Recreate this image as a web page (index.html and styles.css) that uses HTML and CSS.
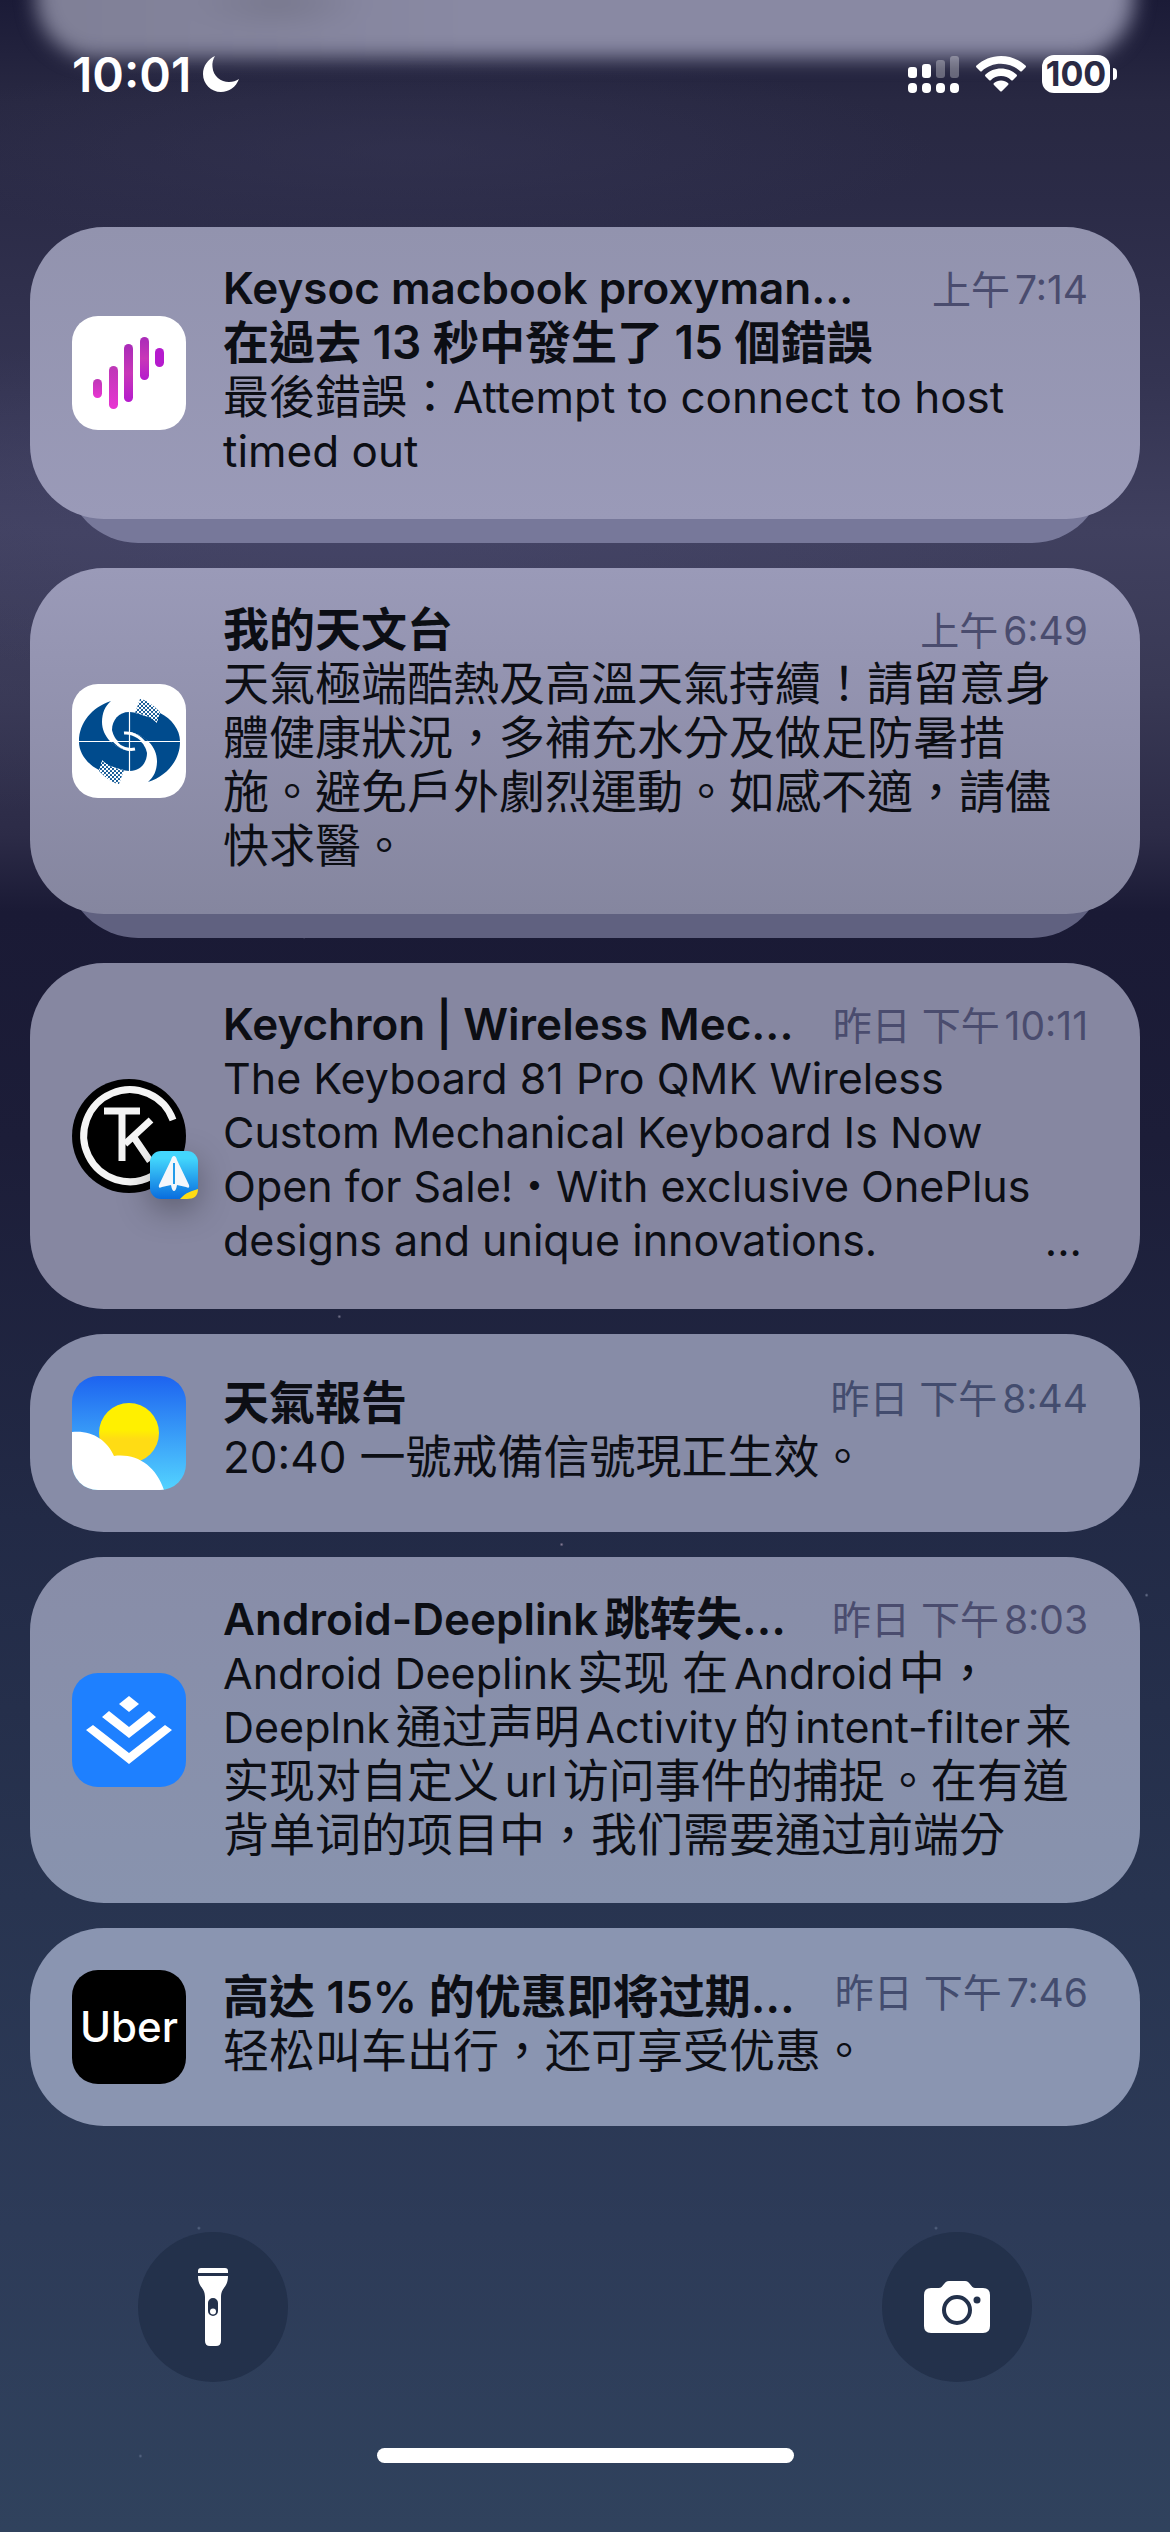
FILE: index.html
```html
<!DOCTYPE html>
<html lang="zh-Hant-TW">
<head>
<meta charset="utf-8">
<meta name="viewport" content="width=device-width">
<title>通知中心</title>
<link rel="stylesheet" href="styles.css">
</head>
<body>
<div class="screen">
  <div class="passing-card"></div>
  <header class="status">
    <div class="status-left">
      <time>10:01</time>
      <svg class="moon" viewBox="0 0 36 36" aria-hidden="true"><path d="M12 0C10 3 9 7 9.500 11C10 20 18 26 26 26C30 26 33 25 36 23C33 31 26 36 18 36C8 36 0 28 0 18C0 10 5 3 12 0Z"/></svg>
    </div>
    <div class="status-right">
      <svg class="signal" viewBox="0 0 52 38" aria-hidden="true">
        <g class="on"><rect x="0" y="12" width="9" height="11" rx="3"/><rect x="14" y="9" width="9" height="14" rx="3"/><rect x="0" y="28" width="9" height="10" rx="4"/><rect x="14" y="28" width="9" height="10" rx="4"/><rect x="28" y="28" width="9" height="10" rx="4"/><rect x="42" y="28" width="9" height="10" rx="4"/></g>
        <g class="off"><rect x="28" y="5" width="9" height="18" rx="3"/><rect x="42" y="1" width="9" height="22" rx="3"/></g>
      </svg>
      <svg class="wifi" viewBox="0 0 50 36" aria-hidden="true"><path d="M25 0C34.500 0 43 3.600 49.500 9.500Q50.500 10.500 49.500 11.500L46 15Q45 16 44 15C39 10.500 32.500 7.800 25 7.800S11 10.500 6 15Q5 16 4 15L.5 11.500Q-.5 10.500 .5 9.500C7 3.600 15.500 0 25 0ZM25 12.500C31 12.500 36.500 14.800 40.500 18.500Q41.500 19.500 40.500 20.500L37 24Q36 25 35 24C32.500 21.500 29 20 25 20S17.500 21.500 15 24Q14 25 13 24L9.500 20.500Q8.500 19.500 9.500 18.500C13.500 14.800 19 12.500 25 12.500ZM25 24.500C28 24.500 30 25.500 32 27Q33 28 32 29L26 35Q25 36 24 35L18 29Q17 28 18 27C20 25.500 22 24.500 25 24.500Z"/></svg>
      <div class="battery"><span>100</span></div>
    </div>
  </header>

  <main class="list">
    <article class="card stacked">
      <svg class="icon" viewBox="0 0 114 114" aria-hidden="true">
        <defs><linearGradient id="bar" x1="0" y1="0" x2="0" y2="1"><stop offset="0" stop-color="#a92bb8"/><stop offset=".5" stop-color="#c837b8"/><stop offset="1" stop-color="#b51bcd"/></linearGradient>
        <linearGradient id="bar2" x1="0" y1="0" x2="0" y2="1"><stop offset="0" stop-color="#bd38b6"/><stop offset="1" stop-color="#e835d2"/></linearGradient></defs>
        <rect width="114" height="114" rx="26" fill="#fff"/>
        <rect x="21" y="63" width="9" height="19" rx="4.500" fill="url(#bar2)"/><rect x="37" y="50" width="9" height="43" rx="4.500" fill="url(#bar2)"/><rect x="52" y="28" width="9" height="58" rx="4.500" fill="url(#bar)"/><rect x="68" y="21" width="9" height="43" rx="4.500" fill="url(#bar)"/><rect x="83" y="32" width="9" height="19" rx="4.500" fill="#b51bcd"/>
      </svg>
      <div class="content">
        <div class="head"><h2 class="latin">Keysoc macbook proxyman...</h2><time>上午7:14</time></div>
        <h3>在過去 13 秒中發生了 15 個錯誤</h3>
        <p>最後錯誤：<span class="latin">Attempt to connect to host timed out</span></p>
      </div>
    </article>

    <article class="card stacked">
      <svg class="icon" viewBox="0 0 114 114" aria-hidden="true">
        <defs><pattern id="dots" width="4" height="4" patternUnits="userSpaceOnUse"><rect width="4" height="4" fill="#fff"/><circle cx="1" cy="1" r="1.100" fill="#004b8d"/><circle cx="3" cy="3" r="1.100" fill="#004b8d"/></pattern></defs>
        <rect width="114" height="114" rx="26" fill="#fff"/>
        <g id="swirl">
          <path fill="#004b8d" d="M39 17C20 23 7 39 7 57L7 58H57V66C42 65 30 52 30 38C30 29 33 22 39 17Z"/>
          <path fill="#004b8d" d="M57 28C47 28 40 36 40 46C41 51 44 56 47 58H57Z"/>
          <path fill="#004b8d" d="M7 58H39C45 63 51 66 57 67V87C52 87 46 84 38 82C32 80 29 82 27 86C15 80 7 69 7 58Z"/>
          <path fill="url(#dots)" d="M30 76C36 82 44 85 52 86L47 100C40 99 33 93 27 87Z"/>
        </g>
        <use href="#swirl" transform="rotate(180 57.500 57.500)"/>
        <path d="M52 49C62 48 72 55 77 66M63 65C53 67 44 61 38 51" fill="none" stroke="#fff" stroke-width="3"/>
        <path d="M57.500 28V87M7 57.500H108" stroke="#fff" stroke-width="1.200"/>
      </svg>
      <div class="content">
        <div class="head"><h2>我的天文台</h2><time>上午6:49</time></div>
        <p>天氣極端酷熱及高溫天氣持續！請留意身體健康狀況，多補充水分及做足防暑措施。避免戶外劇烈運動。如感不適，請儘快求醫。</p>
      </div>
    </article>

    <article class="card">
      <div class="icon avatar">
        <svg viewBox="0 0 114 114" aria-hidden="true"><circle cx="57" cy="57" r="57"/><g fill="none" stroke="#f4f4f4" stroke-width="7"><path d="M101 41A46 46 0 1 0 80 97"/><path d="M32 32H68M50 32V82"/><path d="M79 41L53 65M61 57L78 82"/></g></svg>
        <svg class="badge" viewBox="0 0 48 48" aria-hidden="true"><defs><linearGradient id="sky" x1="0" y1="0" x2="0" y2="1"><stop offset=".15" stop-color="#43d6fc"/><stop offset="1" stop-color="#096dde"/></linearGradient></defs><rect width="48" height="48" rx="11" fill="url(#sky)"/><path d="M30 48C36 41 42 40 48 38C48 45 44 48 37 48Z" fill="#ffdc14"/><path d="M24 5Q26 5 27 9L39 34Q40 38 36 36L27 34Q26 40 24 40Q22 40 21 34L12 36Q8 38 9 34L21 9Q22 5 24 5Z" fill="#f4f7fb"/><path d="M24 12V33" stroke="#249cea" stroke-width="2"/></svg>
      </div>
      <div class="content dense">
        <div class="head"><h2 class="latin">Keychron | Wireless Mec...</h2><time>昨日 下午10:11</time></div>
        <p class="latin">The Keyboard 81 Pro QMK Wireless Custom Mechanical Keyboard Is Now Open for Sale!・With exclusive OnePlus</p>
        <p class="latin last-line"><span>designs and unique innovations.</span><span>...</span></p>
      </div>
    </article>

    <article class="card compact">
      <svg class="icon" viewBox="0 0 114 114" aria-hidden="true">
        <defs><linearGradient id="day" x1="0" y1="0" x2="0" y2="1"><stop offset="0" stop-color="#1d63f0"/><stop offset="1" stop-color="#53d3ff"/></linearGradient><linearGradient id="sun" x1="0" y1="0" x2="0" y2="1"><stop offset=".45" stop-color="#fff000"/><stop offset=".6" stop-color="#ffdc14"/></linearGradient><clipPath id="tile"><rect width="114" height="114" rx="26"/></clipPath></defs>
        <g clip-path="url(#tile)"><rect width="114" height="114" fill="url(#day)"/><circle cx="57" cy="57" r="30" fill="url(#sun)"/><path d="M0 56C20 54 35 64 42 80C65 77 84 90 92 114H0Z" fill="#fff"/></g>
      </svg>
      <div class="content">
        <div class="head"><h2>天氣報告</h2><time>昨日 下午8:44</time></div>
        <p><span class="latin">20:40</span> 一號戒備信號現正生效。</p>
      </div>
    </article>

    <article class="card">
      <svg class="icon" viewBox="0 0 114 114" aria-hidden="true"><rect width="114" height="114" rx="26" fill="#1e80ff"/><path fill="#fff" d="M57 23L67 31L57 39L47 31ZM37 38L57 54L77 38L84 44L57 65L30 44ZM21 52L57 80L93 52L100 57L57 91L14 57Z"/></svg>
      <div class="content dense">
        <div class="head"><h2><span class="latin">Android-Deeplink</span>跳转失…</h2><time>昨日 下午8:03</time></div>
        <p><span class="latin">Android Deeplink</span>实现 在<span class="latin">Android</span>中，<span class="latin">Deeplnk</span>通过声明<span class="latin">Activity</span>的<span class="latin">intent-filter</span>来实现对自定义<span class="latin">url</span>访问事件的捕捉。在有道背单词的项目中，我们需要通过前端分</p>
      </div>
    </article>

    <article class="card compact">
      <div class="icon uber">Uber</div>
      <div class="content">
        <div class="head"><h2>高达 <span class="latin">15%</span> 的优惠即将过期…</h2><time>昨日 下午7:46</time></div>
        <p>轻松叫车出行，还可享受优惠。</p>
      </div>
    </article>
  </main>

  <nav class="actions">
    <button type="button" aria-label="手電筒"><svg width="30" height="78" viewBox="0 0 30 78"><path fill="#fff" fill-rule="evenodd" d="M0 3Q0 0 3 0H27Q30 0 30 3V5H0ZM0 8H30C30 20 23 19 23 29V73Q23 78 18 78H12Q7 78 7 73V29C7 19 0 20 0 8ZM15 30A5 5 0 0 0 10 35V43A5 5 0 0 0 20 43V35A5 5 0 0 0 15 30Z"/><circle cx="15" cy="43.500" r="3" fill="#fff"/></svg></button>
    <button type="button" aria-label="相機"><svg width="66" height="52" viewBox="0 0 66 52"><path fill="#fff" d="M7 7H15C19 7 20 0 25 0H41C46 0 47 7 51 7H59Q66 7 66 14V45Q66 52 59 52H7Q0 52 0 45V14Q0 7 7 7Z"/><circle cx="33" cy="29" r="13" fill="none" stroke="#23314b" stroke-width="4"/><circle cx="53" cy="19" r="3.500" fill="#23314b"/></svg></button>
  </nav>
  <div class="home"></div>
</div>
</body>
</html>
```
FILE: styles.css
```css
* { box-sizing: border-box; }
body { margin: 0; font-family: Inter, "Noto Sans CJK TC", sans-serif; color: #0c0e14; }
.screen {
  position: relative;
  min-height: 100vh;
  overflow: hidden;
  display: flex;
  flex-direction: column;
  background:
    radial-gradient(circle 2px at 26% 37%, #8c8ca8, transparent),
    radial-gradient(circle 2px at 29% 52%, #77778f, transparent),
    radial-gradient(circle 2px at 48% 61%, #8a7f98, transparent),
    radial-gradient(circle 2px at 98% 63%, #6c7590, transparent),
    radial-gradient(circle 2px at 17% 88%, #5c6b88, transparent),
    radial-gradient(circle 2px at 80% 88%, #5c6b88, transparent),
    radial-gradient(circle 2px at 12% 97%, #5c6b88, transparent),
    radial-gradient(ellipse 45% 4% at 35% 6%, #36365580, transparent),
    radial-gradient(ellipse 60% 7% at 30% 20%, #4a4a7080, transparent),
    radial-gradient(ellipse 30% 5% at 0% 27%, #3d3d5c60, transparent),
    linear-gradient(#1b1b37 0%, #282842 4%, #2b2b47 8%, #343452 15%, #40405f 21%, #393955 27%, #2c2b47 33%, #1a1a35 36%, #1c1d38 45%, #222a46 60%, #283450 75%, #2d3b58 88%, #30425d 100%);
}
.passing-card {
  position: absolute;
  top: -80px;
  left: 36px;
  right: 36px;
  height: 138px;
  border-radius: 60px;
  background: radial-gradient(ellipse 90px 30px at 22% 60%, #77778c, transparent), linear-gradient(90deg, #7f7f96, #8989a3 40%);
  filter: blur(10px);
}
.status {
  position: relative;
  display: flex;
  justify-content: space-between;
  padding: 48px 54px 0 72px;
  color: #fff;
  fill: #fff;
}
.status-left, .status-right { display: flex; align-items: center; height: 52px; }
.status-left { gap: 12px; font-size: 48px; font-weight: 600; }
.status-right { gap: 16px; }
.moon { width: 36px; height: 36px; }
.signal { width: 52px; height: 38px; }
.signal .off { opacity: .3; }
.wifi { width: 50px; height: 36px; }
.battery {
  position: relative;
  width: 68px;
  height: 38px;
  margin-right: 6px;
  border-radius: 12px;
  background: #fff;
  color: #2a2a44;
  font-size: 34px;
  font-weight: 700;
  line-height: 38px;
  text-align: center;
}
.battery::after {
  content: "";
  position: absolute;
  left: 71px;
  top: 13px;
  width: 4px;
  height: 12px;
  border-radius: 0 4px 4px 0;
  background: #fff;
}
.list {
  isolation: isolate;
  display: flex;
  flex-direction: column;
  gap: 25px;
  padding: 127px 30px 0;
}
.card {
  position: relative;
  display: flex;
  align-items: center;
  gap: 37px;
  min-height: 198px;
  padding: 0 52px 0 42px;
  border-radius: 74px;
  background: #8a90ae;
}
.card:nth-child(1) { background: linear-gradient(#9293ae, #9a9ab8); }
.card:nth-child(2) { background: linear-gradient(#9a9ab8, #9090ac 50%, #85869f); }
.card:nth-child(3) { background: #8687a1; }
.card:nth-child(4) { background: #878ca7; }
.card:nth-child(5) { background: linear-gradient(#888da8, #8893ae); }
.card:nth-child(6) { background: #8a95b1; }
.stacked { margin-bottom: 24px; }
.stacked::after {
  content: "";
  position: absolute;
  z-index: -1;
  left: 36px;
  right: 36px;
  bottom: -24px;
  height: 144px;
  border-radius: 72px;
  background: #77789a;
}
.stacked:nth-child(2)::after { background: #606180; }
.icon { flex: none; width: 114px; height: 114px; }
.avatar { position: relative; }
.avatar svg { display: block; width: 100%; }
.avatar .badge {
  position: absolute;
  left: 78px;
  top: 72px;
  width: 48px;
  height: 48px;
  filter: drop-shadow(0 10px 16px #00000050);
}
.uber {
  border-radius: 26px;
  background: #000;
  color: #fff;
  font-size: 42px;
  font-weight: 500;
  line-height: 114px;
  text-align: center;
}
.content { flex: 1; min-width: 0; padding: 34px 0 42px; }
.head { display: flex; justify-content: space-between; align-items: flex-start; height: 54px; }
h2, h3, p { margin: 0; font-size: 46px; line-height: 54px; text-autospace: normal; }
h2, h3 { font-weight: 600; white-space: nowrap; }
p { font-weight: 400; }
.latin { font-size: 44px; }
span.latin { line-height: 1; }
.dense p.latin, .dense p .latin { font-size: 43px; }
.last-line { display: flex; justify-content: space-between; padding-right: 6px; }
.head time { color: #4a4c6e; font-size: 39px; line-height: 58px; white-space: nowrap; text-autospace: normal; }
.compact .head time { line-height: 48px; color: #434c6e; }
.actions { display: flex; justify-content: space-between; padding: 106px 138px 0; }
.actions button {
  display: grid;
  place-items: center;
  width: 150px;
  height: 150px;
  padding: 0;
  border: 0;
  border-radius: 50%;
  background: #23314b;
}
.home {
  width: 36%;
  max-width: 417px;
  height: 15px;
  margin: auto auto 69px;
  border-radius: 8px;
  background: #fff;
}
```
